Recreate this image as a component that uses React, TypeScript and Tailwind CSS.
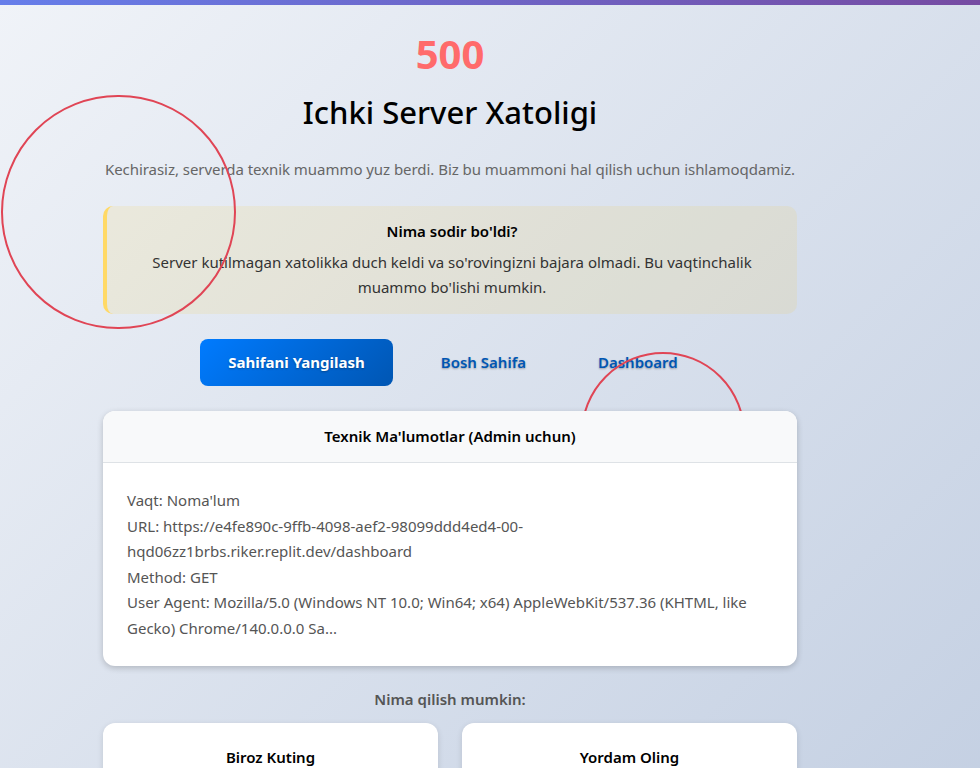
export default function App() {
  const font = { fontFamily: '"Noto Sans", "Open Sans", sans-serif' };
  return (
    <div
      className="relative min-h-screen overflow-hidden bg-[linear-gradient(135deg,#f0f3f8_0%,#c3cfe2_100%)] text-[#333]"
      style={font}
    >
      <div className="h-[5px] bg-[linear-gradient(90deg,#667eea,#764ba2)]" />

      {/* floating circles */}
      <div className="pointer-events-none absolute left-[1px] top-[95px] h-[234px] w-[235px] rounded-full border-2 border-[#e04555]" />
      <div className="pointer-events-none absolute left-[581px] top-[352px] h-[164px] w-[164px] rounded-full border-2 border-[#e04555]" />

      <div className="w-[900px] px-[103px] pt-[25px]">
        <div className="text-center text-[40px] font-bold leading-[48px] text-[#ff6b6b]">500</div>
        <h1 className="mt-[14px] text-center text-[31px] font-medium leading-[40px] text-black">
          Ichki Server Xatoligi
        </h1>
        <p className="mt-[25px] whitespace-nowrap text-center text-[15px] leading-[24px] tracking-[-0.05px] text-[#666]">
          Kechirasiz, serverda texnik muammo yuz berdi. Biz bu muammoni hal qilish uchun ishlamoqdamiz.
        </p>

        <div className="mt-[25px] rounded-[10px] border-l-4 border-[#ffd966] bg-[rgba(255,193,7,0.1)] px-[24px] pb-[14px] pt-[13px] text-center">
          <h3 className="text-[15px] font-semibold leading-[24px] text-black">Nima sodir bo'ldi?</h3>
          <p className="mt-[7px] text-[15px] leading-[25px] text-[#333]">
            Server kutilmagan xatolikka duch keldi va so'rovingizni bajara olmadi. Bu vaqtinchalik
            <br />
            muammo bo'lishi mumkin.
          </p>
        </div>

        <div className="mt-[25px] flex items-center justify-center pl-[10px]">
          <button className="h-[47px] rounded-[8px] bg-[linear-gradient(135deg,#007bff,#0056b3)] px-7 text-[15px] font-bold text-white [text-shadow:0_1px_2px_rgba(0,0,0,0.3)]">
            Sahifani Yangilash
          </button>
          <button className="ml-4 h-[47px] px-8 text-[15px] font-semibold text-[#0056b3] [text-shadow:0_1px_2px_rgba(0,0,0,0.3)]">
            Bosh Sahifa
          </button>
          <button className="ml-2 h-[47px] px-8 text-[15px] font-semibold text-[#0056b3] [text-shadow:0_1px_2px_rgba(0,0,0,0.3)]">
            Dashboard
          </button>
        </div>

        <div className="relative mt-[25px] overflow-hidden rounded-[12px] bg-white shadow-[0_2px_6px_rgba(0,0,0,0.2)]">
          <div className="flex h-[52px] items-center justify-center border-b border-[#dee2e6] bg-[#f8f9fa]">
            <h4 className="text-[15px] font-semibold text-black">Texnik Ma'lumotlar (Admin uchun)</h4>
          </div>
          <div className="px-[24px] pb-[25px] pt-[25px] text-[15px] leading-[25.5px] text-[#555]">
            <div>Vaqt: Noma'lum</div>
            <div>URL: https://e4fe890c-9ffb-4098-aef2-98099ddd4ed4-00-hqd06zz1brbs.riker.replit.dev/dashboard</div>
            <div>Method: GET</div>
            <div>
              User Agent: Mozilla/5.0 (Windows NT 10.0; Win64; x64) AppleWebKit/537.36 (KHTML, like Gecko) Chrome/140.0.0.0 Sa...
            </div>
          </div>
        </div>

        <h3 className="mt-[21px] text-center text-[15px] font-semibold leading-[24px] text-[#555]">
          Nima qilish mumkin:
        </h3>

        <div className="mt-[12px] grid grid-cols-2 gap-6">
          <div className="rounded-[12px] bg-white px-6 pb-6 pt-[22px] text-center shadow-[0_2px_6px_rgba(0,0,0,0.12)]">
            <h4 className="text-[15px] font-semibold leading-[24px] text-black">Biroz Kuting</h4>
            <p className="mt-2 text-[14px] text-[#666]">Muammo bir necha daqiqada hal bo'lishi mumkin.</p>
          </div>
          <div className="rounded-[12px] bg-white px-6 pb-6 pt-[22px] text-center shadow-[0_2px_6px_rgba(0,0,0,0.12)]">
            <h4 className="text-[15px] font-semibold leading-[24px] text-black">Yordam Oling</h4>
            <p className="mt-2 text-[14px] text-[#666]">Muammo davom etsa, administrator bilan bog'laning.</p>
          </div>
        </div>
      </div>
    </div>
  );
}
